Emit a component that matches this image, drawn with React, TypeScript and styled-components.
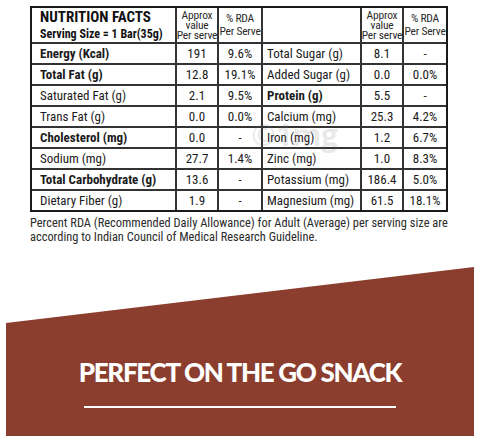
import React from "react";
import styled, { createGlobalStyle } from "styled-components";

const GlobalStyle = createGlobalStyle`
  html, body { margin: 0; padding: 0; background: #fff; }
  body { width: 480px; height: 442px; overflow: hidden; }
`;

const Page = styled.div`
  width: 480px;
  height: 442px;
  display: flex;
  flex-direction: column;
  font-family: "Roboto Condensed", Roboto, sans-serif;
  font-stretch: condensed;
  color: #222;
`;

const TableWrap = styled.div`
  position: relative;
  margin: 6px 0 0 30px;
  width: 418px;
`;

const Table = styled.div`
  display: grid;
  grid-template-columns: 143px 40px 42px 97px 40px 42px;
  grid-template-rows: 34px repeat(8, 19px);
  gap: 2px;
  background: #333;
  border: 2px solid #1a1a1a;
`;

const Cell = styled.div<{ $align?: "left" | "center"; $bold?: boolean; $pad?: number }>`
  background: #fff;
  display: flex;
  align-items: center;
  justify-content: ${(p) => (p.$align === "left" ? "flex-start" : "center")};
  padding-left: ${(p) => p.$pad ?? 0}px;
  font-size: 13px;
  line-height: 16px;
  font-weight: ${(p) => (p.$bold ? 700 : 400)};
  color: #1a1a1a;
  white-space: nowrap;
  overflow: hidden;
`;

const TitleCell = styled.div`
  background: #fff;
  display: flex;
  flex-direction: column;
  justify-content: center;
  padding-left: 8px;
  color: #111;
`;

const Title = styled.div`
  font-size: 15px;
  font-weight: 700;
  line-height: 17px;
`;

const Serving = styled.div`
  font-size: 12px;
  font-weight: 700;
  line-height: 14px;
  margin-top: 1px;
`;

const HeadCell = styled.div<{ $lh: number }>`
  background: #fff;
  display: flex;
  flex-direction: column;
  align-items: center;
  justify-content: center;
  text-align: center;
  font-size: 11.5px;
  line-height: ${(p) => p.$lh}px;
  color: #2a2a2a;
  white-space: nowrap;
  letter-spacing: -0.2px;
`;

const Watermark = styled.div`
  position: absolute;
  left: 221px;
  top: 108px;
  font-family: "Open Sans", sans-serif;
  font-stretch: normal;
  font-size: 30px;
  font-weight: 700;
  letter-spacing: -0.5px;
  color: rgba(120, 120, 120, 0.16);
  pointer-events: none;
`;

const Note = styled.p`
  margin: 4px 0 0 30px;
  width: 440px;
  font-size: 12.4px;
  line-height: 14px;
  color: #2b2b2b;
`;

const Banner = styled.div`
  margin: 23px 6px 0;
  height: 169px;
  background: #8b3e2e;
  clip-path: polygon(0 56px, 100% 0, 100% 100%, 0 100%);
  display: flex;
  flex-direction: column;
  align-items: center;
  padding-top: 92px;
  box-sizing: border-box;
`;

const Slogan = styled.div`
  font-family: Lato, sans-serif;
  font-stretch: normal;
  font-weight: 900;
  font-size: 26px;
  line-height: 26px;
  letter-spacing: -1.3px;
  color: #fff;
  white-space: nowrap;
`;

const Rule = styled.div`
  margin-top: 21px;
  width: 312px;
  height: 2px;
  background: #fff;
`;

type Row = [string, boolean, string, string, string, boolean, string, string];

const rows: Row[] = [
  ["Energy (Kcal)", true, "191", "9.6%", "Total Sugar (g)", false, "8.1", "-"],
  ["Total Fat (g)", true, "12.8", "19.1%", "Added Sugar (g)", false, "0.0", "0.0%"],
  ["Saturated Fat (g)", false, "2.1", "9.5%", "Protein (g)", true, "5.5", "-"],
  ["Trans Fat (g)", false, "0.0", "0.0%", "Calcium (mg)", false, "25.3", "4.2%"],
  ["Cholesterol (mg)", true, "0.0", "-", "Iron (mg)", false, "1.2", "6.7%"],
  ["Sodium (mg)", false, "27.7", "1.4%", "Zinc (mg)", false, "1.0", "8.3%"],
  ["Total Carbohydrate (g)", true, "13.6", "-", "Potassium (mg)", false, "186.4", "5.0%"],
  ["Dietary Fiber (g)", false, "1.9", "-", "Magnesium (mg)", false, "61.5", "18.1%"],
];

const ApproxHead = () => (
  <HeadCell $lh={10}>
    <span>Approx</span>
    <span>value</span>
    <span>Per serve</span>
  </HeadCell>
);

const RdaHead = () => (
  <HeadCell $lh={13}>
    <span>% RDA</span>
    <span>Per Serve</span>
  </HeadCell>
);

export default function App() {
  return (
    <Page>
      <GlobalStyle />
      <TableWrap>
        <Table>
          <TitleCell>
            <Title>NUTRITION FACTS</Title>
            <Serving>Serving Size = 1 Bar(35g)</Serving>
          </TitleCell>
          <ApproxHead />
          <RdaHead />
          <Cell />
          <ApproxHead />
          <RdaHead />
          {rows.map((r) => (
            <React.Fragment key={r[0]}>
              <Cell $align="left" $pad={8} $bold={r[1]}>{r[0]}</Cell>
              <Cell>{r[2]}</Cell>
              <Cell>{r[3]}</Cell>
              <Cell $align="left" $pad={4} $bold={r[5]}>{r[4]}</Cell>
              <Cell>{r[6]}</Cell>
              <Cell>{r[7]}</Cell>
            </React.Fragment>
          ))}
        </Table>
        <Watermark>©1mg</Watermark>
      </TableWrap>
      <Note>
        Percent RDA (Recommended Daily Allowance) for Adult (Average) per serving size are according to Indian Council of Medical Research Guideline.
      </Note>
      <Banner>
        <Slogan>PERFECT ON THE GO SNACK</Slogan>
        <Rule />
      </Banner>
    </Page>
  );
}
